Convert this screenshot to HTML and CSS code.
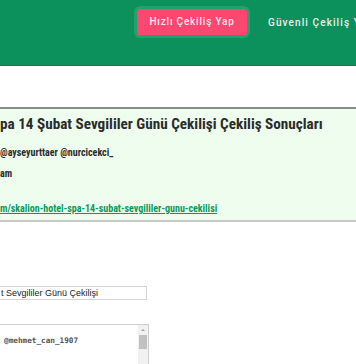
FILE: index.html
```html
<!DOCTYPE html>
<html lang="tr">
<head>
  <meta charset="UTF-8">
  <meta name="viewport" content="width=device-width, initial-scale=1.0">
  <title>Çekiliş Sonuçları</title>
  <link rel="stylesheet" href="styles.css">
</head>
<body>
  <div class="header">
    <div class="nav">
      <a href="#" class="btn-fast">Hızlı Çekiliş Yap</a>
      <a href="#" class="nav-link">Güvenli Çekiliş Yap</a>
    </div>
  </div>

  <!-- Sonuç kutusu -->
  <div class="result">
    <h2 class="result-title">pa 14 Şubat Sevgililer Günü Çekilişi Çekiliş Sonuçları</h2>
    <p class="result-line">@ayseyurttaer @nurcicekci_</p>
    <p class="result-line">am</p>
    <p class="result-line result-link"><a href="#">m/skalion-hotel-spa-14-subat-sevgililer-gunu-cekilisi</a></p>
  </div>

  <div class="form">
    <input type="text" class="title-input" value="t Sevgililer Günü Çekilişi">
    <div class="list-box">
      <div class="list-text">@mehmet_can_1907</div>
      <div class="scrollbar">
        <span class="arrow"></span>
        <span class="thumb"></span>
      </div>
    </div>
  </div>
</body>
</html>
```

FILE: styles.css
```css
body {
  margin: 0;
  font-family: Roboto, Arial, sans-serif;
  background-color: #ffffff;
  overflow: hidden;
  width: 356px;
  height: 364px;
}
.header {
  background-color: #0c915d;
  height: 65px;
  border-bottom: 1px solid #0a844f;
}
.nav {
  display: flex;
  align-items: center;
  padding-top: 9px;
  padding-left: 137px;
  white-space: nowrap;
}
.btn-fast {
  background-color: #fd4770;
  color: #fbe9ee;
  font-size: 10px;
  font-weight: 500;
  letter-spacing: 0.8px;
  text-decoration: none;
  width: 110px;
  height: 26px;
  line-height: 26px;
  text-align: center;
  border-radius: 3px;
  box-shadow: 0 0 0 3px #23a06e;
  flex-shrink: 0;
}
.nav-link {
  color: #e4f4ec;
  font-size: 10px;
  font-weight: 500;
  letter-spacing: 1.1px;
  text-decoration: none;
  margin-left: 21px;
}
.result {
  margin-top: 41px;
  background-color: #eefdee;
  border-top: 2px solid #8a8a8a;
  border-bottom: 2px solid #c8c8c8;
  padding: 6px 0 6px 0;
  white-space: nowrap;
  font-family: "Roboto Condensed", "Liberation Sans Narrow", Roboto, sans-serif;
}
.result-title {
  margin: 0 0 14px 0;
  font-size: 15.2px;
  font-weight: 700;
  color: #2b2b2b;
}
.result-line {
  margin: 0 0 10px 0;
  font-size: 10px;
  font-weight: 700;
  color: #2b2b2b;
}
.result-link {
  margin-top: 24px;
  margin-bottom: 0;
}
.result-link a {
  color: #0b9a5c;
}
.form {
  margin-top: 64px;
}
.title-input {
  display: block;
  margin: 0 0 0 -2px;
  width: 145px;
  height: 12px;
  padding: 0 0 0 2px;
  border: 1px solid #d4d4d4;
  font-family: Arial, sans-serif;
  font-size: 9px;
  color: #222;
  box-sizing: content-box;
}
.list-box {
  margin-top: 24px;
  width: 148px;
  height: 60px;
  border: 1px solid #cfcfcf;
  border-left: none;
  display: flex;
  justify-content: space-between;
}
.list-text {
  font-family: "DejaVu Sans Mono", monospace;
  font-size: 7.7px;
  font-weight: 700;
  color: #555;
  padding: 11px 0 0 4px;
}
.scrollbar {
  width: 10px;
  background-color: #f1f1f1;
  display: flex;
  flex-direction: column;
  align-items: center;
}
.arrow {
  margin-top: 4px;
  width: 0;
  height: 0;
  border-left: 2px solid transparent;
  border-right: 2px solid transparent;
  border-bottom: 2px solid #a3a3a3;
}
.thumb {
  margin-top: 4px;
  width: 8px;
  height: 14px;
  background-color: #c1c1c1;
}
```
